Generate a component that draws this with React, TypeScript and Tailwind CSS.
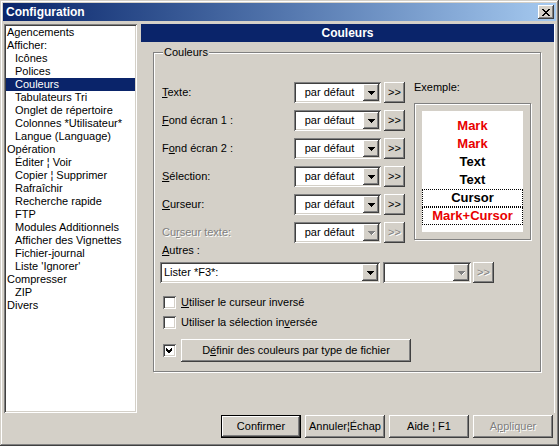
import React from "react";

const RAISED =
  "shadow-[inset_-1px_-1px_#404040,inset_1px_1px_#fff,inset_-2px_-2px_#808080,inset_2px_2px_#d4d0c8]";
const SUNKEN =
  "shadow-[inset_1px_1px_#808080,inset_-1px_-1px_#fff,inset_2px_2px_#404040,inset_-2px_-2px_#d4d0c8]";
const ETCHED = "border border-[#808080] shadow-[1px_1px_0_#fff,inset_1px_1px_0_#fff]";
const DISABLED = "text-[#808080] [text-shadow:1px_1px_0_#fff]";

const TREE: { label: React.ReactNode; indent?: boolean; selected?: boolean }[] = [
  { label: "Agencements" },
  { label: "Afficher:" },
  { label: "Icônes", indent: true },
  { label: "Polices", indent: true },
  { label: "Couleurs", indent: true, selected: true },
  { label: "Tabulateurs Tri", indent: true },
  { label: "Onglet de répertoire", indent: true },
  { label: "Colonnes *Utilisateur*", indent: true },
  { label: "Langue (Language)", indent: true },
  { label: "Opération" },
  { label: "Éditer ¦ Voir", indent: true },
  { label: "Copier ¦ Supprimer", indent: true },
  { label: "Rafraîchir", indent: true },
  { label: "Recherche rapide", indent: true },
  { label: "FTP", indent: true },
  { label: "Modules Additionnels", indent: true },
  { label: "Afficher des Vignettes", indent: true },
  { label: "Fichier-journal", indent: true },
  { label: "Liste 'Ignorer'", indent: true },
  { label: "Compresser" },
  { label: "ZIP", indent: true },
  { label: "Divers" },
];

// accelerator key: underline one letter, like the Win32 "&" marker
function Acc({ text, at }: { text: string; at: number }) {
  return (
    <>
      {text.slice(0, at)}
      <u>{text[at]}</u>
      {text.slice(at + 1)}
    </>
  );
}

function Arrow({ disabled }: { disabled?: boolean }) {
  return (
    <svg width="7" height="4" viewBox="0 0 7 4" shapeRendering="crispEdges">
      <path d="M0 0h7v1H0zM1 1h5v1H1zM2 2h3v1H2zM3 3h1v1H3z" fill={disabled ? "#808080" : "#000"} />
      {disabled && <path d="M4 3h1v1H4zM5 2h1v1H5zM6 1h1v1H6z" fill="#fff" />}
    </svg>
  );
}

function Combo({ text, width, disabled }: { text?: string; width: string; disabled?: boolean }) {
  return (
    <div className={`flex h-[21px] shrink-0 items-center bg-white ${width} ${SUNKEN}`}>
      <span className={`flex-1 truncate ${text === "par défaut" ? "pl-[2px] text-center" : "pl-[4px]"}`}>{text}</span>
      <div className={`mr-[2px] flex h-[17px] w-[16px] items-center justify-center bg-[#d4d0c8] ${RAISED}`}>
        <Arrow disabled={disabled} />
      </div>
    </div>
  );
}

function More({ disabled }: { disabled?: boolean }) {
  return (
    <div
      className={`flex h-[21px] w-[21px] shrink-0 items-center justify-center pb-[1px] text-[11px] ${RAISED} ${
        disabled ? DISABLED : "text-black"
      }`}
    >
      &gt;&gt;
    </div>
  );
}

function ColorRow({ label, disabled }: { label: React.ReactNode; disabled?: boolean }) {
  return (
    <div className="flex h-[21px] items-center">
      <span className={`w-[132px] shrink-0 ${disabled ? DISABLED : ""}`}>{label}</span>
      <Combo text="par défaut" width="w-[87px]" disabled={disabled} />
      <div className="ml-[3px]">
        <More disabled={disabled} />
      </div>
    </div>
  );
}

function Check({ checked }: { checked?: boolean }) {
  return (
    <div className={`flex h-[13px] w-[13px] shrink-0 items-center justify-center bg-white ${SUNKEN}`}>
      {checked && (
        <svg width="7" height="7" viewBox="0 0 7 7" shapeRendering="crispEdges">
          <path d="M6 0v3L3 6H2L0 4V1l2 2h1l3-3z" fill="#000" />
        </svg>
      )}
    </div>
  );
}

function Button({
  children,
  isDefault,
  disabled,
}: {
  children: React.ReactNode;
  isDefault?: boolean;
  disabled?: boolean;
}) {
  const face = isDefault
    ? "shadow-[inset_0_0_0_1px_#000,inset_-2px_-2px_#404040,inset_2px_2px_#fff,inset_-3px_-3px_#808080]"
    : RAISED;
  return (
    <div
      className={`flex h-[23px] w-[80px] items-center justify-center ${face} ${disabled ? DISABLED : "text-black"}`}
    >
      {children}
    </div>
  );
}

const EXAMPLE: { text: string; red?: boolean; cursor?: boolean }[] = [
  { text: "Mark", red: true },
  { text: "Mark", red: true },
  { text: "Text" },
  { text: "Text" },
  { text: "Cursor", cursor: true },
  { text: "Mark+Cursor", red: true, cursor: true },
];

export default function App() {
  return (
    <div
      className={`flex h-[446px] w-[559px] flex-col overflow-hidden bg-[#d4d0c8] p-[3px] text-[11px] leading-[13px] text-black [font-family:'Liberation_Sans',Arial,sans-serif] shadow-[inset_-1px_-1px_#404040,inset_1px_1px_#d4d0c8,inset_-2px_-2px_#808080,inset_2px_2px_#fff]`}
    >
      {/* title bar */}
      <div className="flex h-[18px] shrink-0 items-center bg-gradient-to-r from-[#0a246a] to-[#a6caf0] pl-[3px] pr-[2px]">
        <span className="flex-1 text-[12px] font-bold text-white">Configuration</span>
        <div className={`flex h-[14px] w-[16px] items-center justify-center bg-[#d4d0c8] ${RAISED}`}>
          <svg width="8" height="7" viewBox="0 0 8 7" shapeRendering="crispEdges">
            <path
              d="M0 0h2v1H0zM6 0h2v1H6zM1 1h2v1H1zM5 1h2v1H5zM2 2h4v1H2zM3 3h2v1H3zM2 4h4v1H2zM1 5h2v1H1zM5 5h2v1H5zM0 6h2v1H0zM6 6h2v1H6z"
              fill="#000"
            />
          </svg>
        </div>
      </div>

      <div className="mt-[3px] flex">
        {/* page tree */}
        <div className={`ml-[1px] h-[389px] w-[133px] shrink-0 bg-white p-[2px] ${SUNKEN}`}>
          {TREE.map((it, i) => (
            <div
              key={i}
              className={`flex h-[13px] items-center whitespace-nowrap ${it.indent ? "pl-[9px]" : "pl-[1px]"} ${
                it.selected ? "bg-[#0a246a] text-white" : ""
              }`}
            >
              {it.label}
            </div>
          ))}
        </div>

        {/* page */}
        <div className="ml-[4px] mr-[1px] flex h-[389px] flex-1 flex-col border-r border-r-white">
          <div className="flex h-[18px] shrink-0 items-center justify-center bg-[#0a246a] text-[12px] font-bold text-white">
            Couleurs
          </div>

          <div className={`relative ml-[12px] mt-[10px] h-[320px] w-[388px] ${ETCHED}`}>
            <span className="absolute left-[9px] top-[-7px] bg-[#d4d0c8] px-[1px]">Couleurs</span>

            <div className="flex pl-[8px] pt-[29px]">
              <div className="flex w-[243px] flex-col gap-[7px]">
                <ColorRow label={<Acc text="Texte:" at={0} />} />
                <ColorRow label={<Acc text="Fond écran 1 :" at={0} />} />
                <ColorRow label={<Acc text="Fond écran 2 :" at={1} />} />
                <ColorRow label={<Acc text="Sélection:" at={0} />} />
                <ColorRow label={<Acc text="Curseur:" at={0} />} />
                <ColorRow label={<Acc text="Curseur texte:" at={2} />} disabled />
              </div>

              <div className="ml-[9px] flex flex-col">
                <span className="mt-[-1px] h-[13px]">Exemple:</span>
                <div className={`mt-[9px] h-[137px] w-[117px] p-[7px] ${ETCHED}`}>
                  <div className="flex h-full flex-col bg-white pt-[6px] text-[13px] font-bold leading-[18px]">
                    {EXAMPLE.map((e, i) => (
                      <div
                        key={i}
                        className={`flex h-[18px] items-center justify-center ${
                          e.red ? "text-[#e80000]" : "text-black"
                        } ${e.cursor ? "border border-dotted border-black" : ""}`}
                      >
                        {e.text}
                      </div>
                    ))}
                  </div>
                </div>
              </div>
            </div>

            <div className="mt-[1px] pl-[8px]">
              <Acc text="Autres :" at={0} />
            </div>
            <div className="mt-[5px] flex items-center pl-[6px]">
              <Combo text={"Lister *F3*:"} width="w-[220px]" />
              <div className="ml-[3px]">
                <Combo width="w-[88px]" disabled />
              </div>
              <div className="ml-[2px]">
                <More disabled />
              </div>
            </div>

            <div className="mt-[13px] flex items-center gap-[5px] pl-[9px]">
              <Check />
              <span>
                <Acc text="Utiliser le curseur inversé" at={0} />
              </span>
            </div>
            <div className="mt-[7px] flex items-center gap-[5px] pl-[9px]">
              <Check />
              <span>
                <Acc text="Utiliser la sélection inversée" at={24} />
              </span>
            </div>
            <div className="mt-[10px] flex items-center gap-[5px] pl-[9px]">
              <Check checked />
              <div className={`flex h-[23px] w-[230px] items-center justify-center ${RAISED}`}>
                <Acc text="Définir des couleurs par type de fichier" at={1} />
              </div>
            </div>
          </div>
        </div>
      </div>

      {/* dialog buttons */}
      <div className="mt-[2px] flex justify-end gap-[4px] pr-[3px]">
        <Button isDefault>Confirmer</Button>
        <Button>Annuler¦Échap</Button>
        <Button>Aide ¦ F1</Button>
        <Button disabled>
          <Acc text="Appliquer" at={1} />
        </Button>
      </div>
    </div>
  );
}
